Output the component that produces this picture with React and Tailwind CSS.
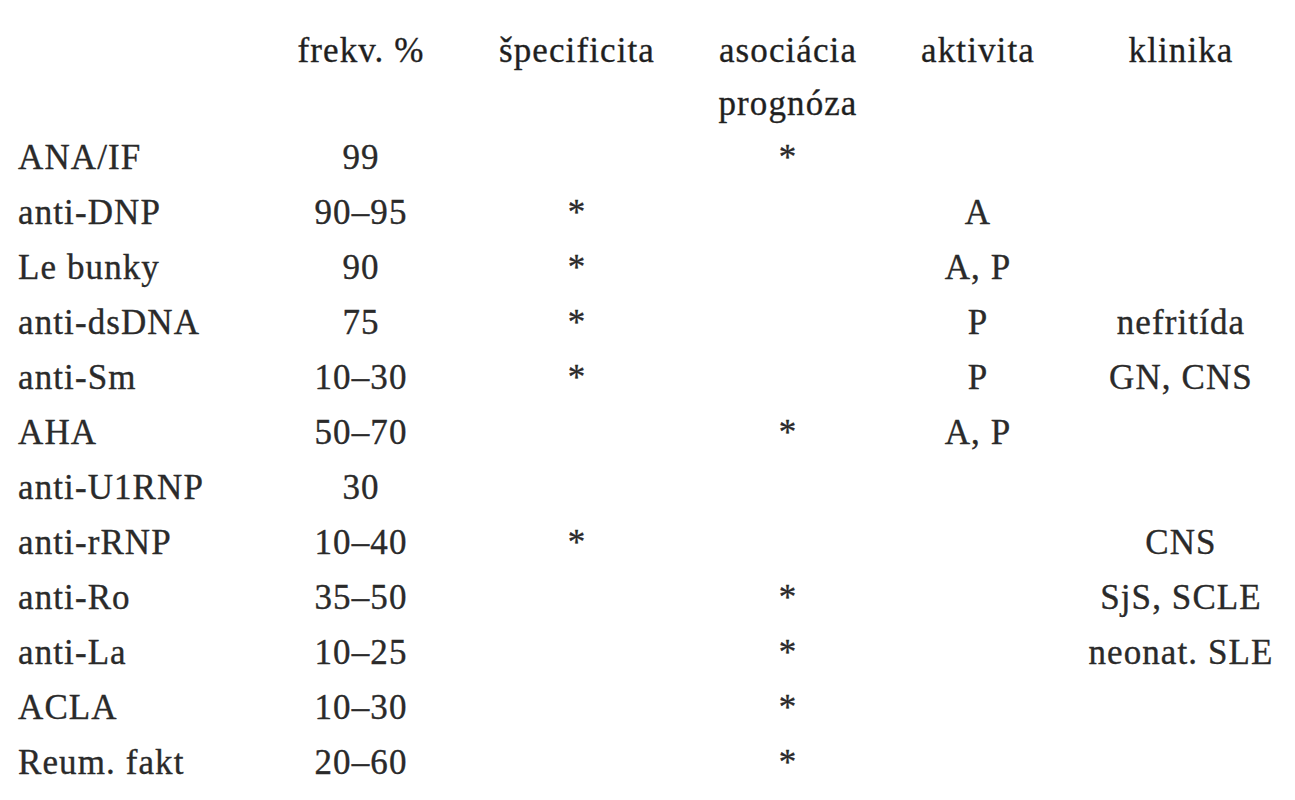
import React from "react";

const rows = [
    ["ANA/IF", "99", "", "*", "", ""],
    ["anti-DNP", "90–95", "*", "", "A", ""],
    ["Le bunky", "90", "*", "", "A, P", ""],
    ["anti-dsDNA", "75", "*", "", "P", "nefritída"],
    ["anti-Sm", "10–30", "*", "", "P", "GN, CNS"],
    ["AHA", "50–70", "", "*", "A, P", ""],
    ["anti-U1RNP", "30", "", "", "", ""],
    ["anti-rRNP", "10–40", "*", "", "", "CNS"],
    ["anti-Ro", "35–50", "", "*", "", "SjS, SCLE"],
    ["anti-La", "10–25", "", "*", "", "neonat. SLE"],
    ["ACLA", "10–30", "", "*", "", ""],
    ["Reum. fakt", "20–60", "", "*", "", ""],
];

const cols = "grid grid-cols-[255px_212px_220px_202px_178px_228px]";

const App = () => {
    return (
        <div
            className="w-[1295px] h-[800px] bg-white overflow-hidden pt-[24px] text-[35px] tracking-[1.1px] text-[#2a2a2a] [-webkit-text-stroke:0.35px_#2a2a2a]"
            style={{ fontFamily: '"Liberation Serif", "Times New Roman", serif' }}
        >
            {/* Header */}
            <div className={`${cols} leading-[53px] text-[#1f1f1f]`}>
                <div></div>
                <div className="text-center">frekv. %</div>
                <div className="text-center">špecificita</div>
                <div className="text-center">
                    asociácia
                    <br />
                    prognóza
                </div>
                <div className="text-center">aktivita</div>
                <div className="text-center">klinika</div>
            </div>

            {/* Rows */}
            {rows.map((row, i) => (
                <div key={i} className={`${cols} leading-[55px]`}>
                    <div className="pl-[18px] whitespace-nowrap">{row[0]}</div>
                    {row.slice(1).map((cell, j) => (
                        <div key={j} className="text-center whitespace-nowrap">
                            {cell}
                        </div>
                    ))}
                </div>
            ))}
        </div>
    );
};

export default App;
